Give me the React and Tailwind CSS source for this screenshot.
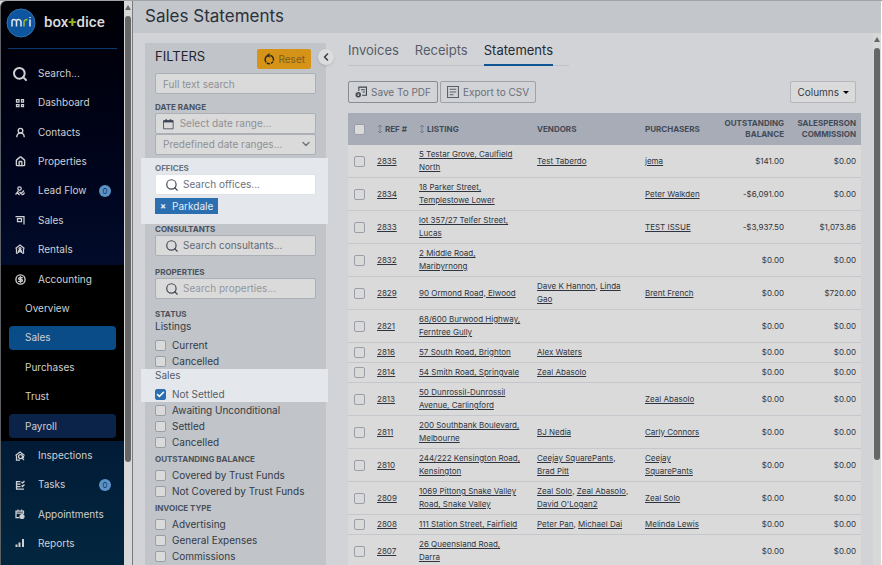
import { useState } from 'react';
import {
  Search,
  UserRound,
  House,
  CircleDollarSign,
  ChevronLeft,
  ChevronDown,
  Check,
} from 'lucide-react';

// ========== ICONS ==========
function Icon({ children }) {
  return (
    <svg viewBox="0 0 20 20" className="size-2.5" fill="none" stroke="currentColor" strokeWidth="2.500">
      {children}
    </svg>
  );
}

const DashboardIcon = () => (
  <Icon>
    <path d="M3 3h5v5H3zM13 3h4v5h-4zM3 13h5v4H3zM13 13h4v4h-4z" />
  </Icon>
);

const LeadIcon = () => (
  <Icon>
    <circle cx="9" cy="5" r="3.5" />
    <path d="M7 9c-1 3-2 4-4 5M1 17l4-4 4 5M9 12l3 3 6-6M13 17c3 1 5-1 6-4" />
  </Icon>
);

const SignIcon = () => (
  <Icon>
    <path d="M1 3h17v16" />
    <path d="M5 7h8v6H5z" />
  </Icon>
);

const RentalIcon = () => (
  <Icon>
    <path d="M1 9l9-7 9 7M3 9v9h3M17 9v9h-3" />
    <circle cx="10" cy="9" r="2" />
    <path d="M7 18v-4q3-3 6 0v4M7 15h6" />
  </Icon>
);

const InspectionIcon = () => (
  <Icon>
    <path d="M1 9l9-7 9 7M3 9v9h7" />
    <circle cx="11" cy="11" r="4" />
    <path d="M14 14l4 4M17 10v4" />
  </Icon>
);

const TasksIcon = () => (
  <Icon>
    <path d="M2 3h9M2 8h9M2 13h9M2 18h16M3 2v16M13 4l2 2 4-4M13 11l2 2 4-4" />
  </Icon>
);

const AppointmentIcon = () => (
  <Icon>
    <path d="M9 17H2V4h15v6M2 8h15M6 1v4M13 1v4" />
    <circle cx="14" cy="15" r="4" fill="currentColor" />
  </Icon>
);

const ReportsIcon = () => (
  <Icon>
    <path d="M3 18v-5M9 18V9M16 18V2" strokeWidth="4" />
  </Icon>
);

const ResetIcon = () => (
  <svg viewBox="0 0 20 20" className="size-3 text-[#2e2a1c]" fill="none" stroke="currentColor" strokeWidth="2.500">
    <path d="M9 4a7 7 0 1 0 3 0" strokeDasharray="14 1.500 5 1.500 5 1.500" />
    <path d="M11 0L6 4l5 4z" fill="currentColor" stroke="none" />
  </svg>
);

const CalendarIcon = () => (
  <svg viewBox="0 0 20 20" className="size-3 text-[#3b4450]" fill="none" stroke="currentColor" strokeWidth="1.500">
    <path d="M1 4h18v15H1z" />
    <path d="M1 5h18" strokeWidth="4" />
    <path d="M6 1v4M14 1v4" strokeWidth="3" />
  </svg>
);

const PdfIcon = () => (
  <svg viewBox="0 0 22 22" className="size-3 text-[#3f464f]" fill="none" stroke="currentColor" strokeWidth="2">
    <path d="M7 9V2h14v15h-8M11 7h7M14 11h4" />
    <circle cx="6" cy="16" r="5" fill="currentColor" stroke="none" />
    <path d="M6 13v5M4 16l2 2 2-2" stroke="#d2d3d7" strokeWidth="1.500" />
  </svg>
);

const CsvIcon = () => (
  <svg viewBox="0 0 22 22" className="size-3 text-[#59606a]" fill="none" stroke="currentColor" strokeWidth="2">
    <path d="M1 1h20v20H1zM5 6h12M5 11h12M5 16h7" />
  </svg>
);

const SortIcon = () => (
  <svg viewBox="0 0 6 10" className="h-2.5 w-1.5 shrink-0 text-[#7a808b]" fill="none" stroke="currentColor">
    <path d="M3 1v8M1 3l2-2 2 2M1 7l2 2 2-2" />
  </svg>
);

// ========== DATA ==========
const topMenu = [
  { label: 'Search...', icon: <Search className="size-4 shrink-0" strokeWidth={3} /> },
  { label: 'Dashboard', icon: <DashboardIcon /> },
  { label: 'Contacts', icon: <UserRound className="size-[11px]" strokeWidth={3} /> },
  { label: 'Properties', icon: <House className="size-[11px]" strokeWidth={3} /> },
  { label: 'Lead Flow', icon: <LeadIcon />, count: 0 },
  { label: 'Sales', icon: <SignIcon /> },
  { label: 'Rentals', icon: <RentalIcon /> },
];

const accountingMenu = [
  { label: 'Overview', style: '' },
  { label: 'Sales', style: 'bg-[#0a4c88]' },
  { label: 'Purchases', style: '' },
  { label: 'Trust', style: '' },
  { label: 'Payroll', style: 'bg-[#0c2349]' },
];

const bottomMenu = [
  { label: 'Inspections', icon: <InspectionIcon /> },
  { label: 'Tasks', icon: <TasksIcon />, count: 0 },
  { label: 'Appointments', icon: <AppointmentIcon /> },
  { label: 'Reports', icon: <ReportsIcon /> },
];

const statements = [
  { ref: 2835, listing: '5 Testar Grove, Caulfield\nNorth', vendors: ['Test Taberdo'], purchasers: ['jema'], balance: '$141.00', commission: '$0.00' },
  { ref: 2834, listing: '18 Parker Street,\nTemplestowe Lower', vendors: [], purchasers: ['Peter Walkden'], balance: '-$6,091.00', commission: '$0.00' },
  { ref: 2833, listing: 'lot 357/27 Telfer Street,\nLucas', vendors: [], purchasers: ['TEST ISSUE'], balance: '-$3,937.50', commission: '$1,073.86' },
  { ref: 2832, listing: '2 Middle Road,\nMaribyrnong', vendors: [], purchasers: [], balance: '$0.00', commission: '$0.00' },
  { ref: 2829, listing: '90 Ormond Road, Elwood', vendors: ['Dave K Hannon', 'Linda\nGao'], purchasers: ['Brent French'], balance: '$0.00', commission: '$720.00' },
  { ref: 2821, listing: '68/600 Burwood Highway,\nFerntree Gully', vendors: [], purchasers: [], balance: '$0.00', commission: '$0.00' },
  { ref: 2816, listing: '57 South Road, Brighton', vendors: ['Alex Waters'], purchasers: [], balance: '$0.00', commission: '$0.00' },
  { ref: 2814, listing: '54 Smith Road, Springvale', vendors: ['Zeal Abasolo'], purchasers: [], balance: '$0.00', commission: '$0.00' },
  { ref: 2813, listing: '50 Dunrossil-Dunrossil\nAvenue, Carlingford', vendors: [], purchasers: ['Zeal Abasolo'], balance: '$0.00', commission: '$0.00' },
  { ref: 2811, listing: '200 Southbank Boulevard,\nMelbourne', vendors: ['BJ Nedia'], purchasers: ['Carly Connors'], balance: '$0.00', commission: '$0.00' },
  { ref: 2810, listing: '244/222 Kensington Road,\nKensington', vendors: ['Ceejay SquarePants', '\nBrad Pitt'], purchasers: ['Ceejay\nSquarePants'], balance: '$0.00', commission: '$0.00' },
  { ref: 2809, listing: '1069 Pittong Snake Valley\nRoad, Snake Valley', vendors: ['Zeal Solo', 'Zeal Abasolo', "\nDavid O'Logan2"], purchasers: ['Zeal Solo'], balance: '$0.00', commission: '$0.00' },
  { ref: 2808, listing: '111 Station Street, Fairfield', vendors: ['Peter Pan', 'Michael Dai'], purchasers: ['Melinda Lewis'], balance: '$0.00', commission: '$0.00' },
  { ref: 2807, listing: '26 Queensland Road,\nDarra', vendors: [], purchasers: [], balance: '$0.00', commission: '$0.00' },
];

// ========== SHARED ==========
function ScrollBar({ className, thumb }) {
  return (
    <div className={`flex w-2 shrink-0 flex-col items-center bg-[#d8d8d8] ${className}`} aria-hidden="true">
      <div className="border-x-3 border-b-5 border-x-transparent border-b-[#666]" />
      <div className={`mt-1.5 w-1.5 rounded-full bg-[#666] ${thumb}`} />
    </div>
  );
}

function CheckBox({ label, id, defaultChecked = false }) {
  return (
    <span className="relative flex size-[11px] shrink-0">
      <input
        id={id}
        type="checkbox"
        aria-label={label}
        defaultChecked={defaultChecked}
        className="peer size-[11px] appearance-none rounded-xs border border-[#9a9ea8] bg-[#dadada] checked:border-[#2b6fb0] checked:bg-[#2b6fb0]"
      />
      <Check className="pointer-events-none absolute inset-px hidden size-[9px] text-white peer-checked:block" strokeWidth={4} />
    </span>
  );
}

// ========== SIDEBAR ==========
function MenuItem({ item }) {
  return (
    <a href="#" className="flex h-[29px] items-center pr-[13px] pl-[11px]">
      <span className="flex w-4 justify-center">{item.icon}</span>
      <span className="ml-2.5 flex-1">{item.label}</span>
      {item.count !== undefined && (
        <span className="flex size-3 items-center justify-center rounded-full bg-[#5b93c8] text-[8px] text-[#12355c]">
          {item.count}
        </span>
      )}
    </a>
  );
}

function Sidebar() {
  return (
    <nav className="flex w-[124px] shrink-0 flex-col overflow-hidden rounded-tl-md border-l border-[#5d6166] bg-linear-to-b from-[#000006] via-[#010b29] via-45% to-[#03263f] text-[10px] text-[#cfd0d2]">
      <div className="mx-[5px] flex h-[47px] shrink-0 items-center pb-1">
        <svg viewBox="0 0 30 30" className="size-[30px] shrink-0">
          <circle cx="15" cy="15" r="14" fill="#0e559f" stroke="#2f74b5" />
          <path d="M6 18.500v-5q0-2 2-2t2.500 2v5M10.500 13.500q0-2 2-2t2.500 2v5" fill="none" stroke="#e3e8ee" strokeWidth="1.500" />
          <path d="M18 18.500v-4q0-3 3.500-3" fill="none" stroke="#9dbb2c" strokeWidth="1.500" />
          <path d="M24 11.500v7M24 9v1" fill="none" stroke="#e3e8ee" strokeWidth="1.500" />
        </svg>
        <span className="ml-2 font-['Roboto'] text-[15px] font-medium whitespace-nowrap text-[#dcdcdc]">
          box<span className="font-bold text-[#94b51c]">+</span>dice
        </span>
      </div>
      <div className="mx-[7px] h-px shrink-0 bg-[#083a70]" />
      <div className="flex h-[216px] shrink-0 flex-col justify-between pt-2.5 pb-px">
        {topMenu.map((item) => (
          <MenuItem key={item.label} item={item} />
        ))}
      </div>
      <div className="shrink-0 bg-black pb-[3px]">
        <MenuItem item={{ label: 'Accounting', icon: <CircleDollarSign className="size-[11px]" strokeWidth={3} /> }} />
        <div className="mx-2 mt-0.5 flex h-[142px] flex-col justify-between">
          {accountingMenu.map((item) => (
            <a key={item.label} href="#" className={`flex h-6 items-center rounded-sm px-4 ${item.style}`}>
              {item.label}
            </a>
          ))}
        </div>
      </div>
      <div className="flex h-[117px] shrink-0 flex-col justify-between">
        {bottomMenu.map((item) => (
          <MenuItem key={item.label} item={item} />
        ))}
      </div>
    </nav>
  );
}

// ========== FILTERS ==========
function FilterLabel({ children, htmlFor, className = 'text-[#4a525e]' }) {
  return (
    <label htmlFor={htmlFor} className={`block text-[8px] leading-[11px] font-bold ${className}`}>
      {children}
    </label>
  );
}

function SearchBox({ id, placeholder, className }) {
  return (
    <div className={`flex h-[21px] items-center rounded-xs border pl-[9px] ${className}`}>
      <Search className="size-3.5 shrink-0 text-[#3f4854]" strokeWidth={2} />
      <input id={id} type="text" placeholder={placeholder} className="ml-1 w-full min-w-0 bg-transparent outline-none" />
    </div>
  );
}

function CheckRow({ id, label, defaultChecked }) {
  return (
    <div className="flex h-4 items-center gap-1.5">
      <CheckBox id={id} defaultChecked={defaultChecked} />
      <label htmlFor={id}>{label}</label>
    </div>
  );
}

function Filters({ onCollapse }) {
  return (
    <aside className="relative w-[181px] shrink-0 bg-[#c1c4c9] px-2.5 pt-1.5 text-[10px] text-[#343b45]">
      <button
        type="button"
        aria-label="Collapse filters"
        onClick={onCollapse}
        className="absolute top-1.5 -right-2 flex size-4 items-center justify-center rounded-full bg-[#dcdcdc] text-[#333b45] shadow"
      >
        <ChevronLeft className="size-3" strokeWidth={3} />
      </button>

      <div className="flex h-6 items-start justify-between pr-[5px]">
        <h2 className="text-[13px] leading-[14px] text-[#1f2430]">FILTERS</h2>
        <button type="button" className="flex h-5 items-center gap-1 rounded-xs bg-[#d59318] px-1.5 text-[#7c5c1d]">
          <ResetIcon />
          Reset
        </button>
      </div>
      <input
        type="text"
        aria-label="Full text search"
        placeholder="Full text search"
        className="block h-[21px] w-full rounded-xs border border-[#acafb6] bg-[#dadada] px-[7px] placeholder:text-[#8e9094]"
      />

      <FilterLabel htmlFor="date-range" className="mt-2 text-[#4a525e]">DATE RANGE</FilterLabel>
      <div className="flex h-[21px] items-center rounded-xs border border-[#acafb6] bg-[#dadada] pl-[7px]">
        <CalendarIcon />
        <input
          id="date-range"
          type="text"
          placeholder="Select date range..."
          className="ml-1.5 w-full min-w-0 bg-transparent outline-none placeholder:text-[#8e9094]"
        />
      </div>
      <div className="relative">
        <select
          aria-label="Predefined date ranges"
          className="block h-[21px] w-full appearance-none rounded-xs border border-[#acafb6] bg-[#dadada] px-[7px] text-[#8e9094]"
        >
          <option>Predefined date ranges...</option>
        </select>
        <ChevronDown className="pointer-events-none absolute top-1 right-1 size-3 text-[#707680]" strokeWidth={3} />
      </div>

      {/* Highlighted offices filter */}
      <div className="-mr-3 -ml-3.5 mt-[3px] bg-[#e4e8ed] pt-[5px] pr-3 pb-2.5 pl-3.5">
        <FilterLabel htmlFor="offices" className="text-[#6a727d]">OFFICES</FilterLabel>
        <SearchBox id="offices" placeholder="Search offices..." className="border-[#dfe3e8] bg-white [&_input]:placeholder:text-[#6b727b]" />
        <button type="button" className="mt-[3px] flex h-4 items-center gap-1.5 bg-[#2b6fb0] px-[5px] text-[#e6edf5]">
          <span className="text-[9px] font-bold">×</span>
          Parkdale
        </button>
      </div>

      <FilterLabel htmlFor="consultants">CONSULTANTS</FilterLabel>
      <SearchBox id="consultants" placeholder="Search consultants..." className="border-[#acafb6] bg-[#dadada] [&_input]:placeholder:text-[#636973]" />
      <FilterLabel htmlFor="properties" className="mt-[11px] text-[#4a525e]">PROPERTIES</FilterLabel>
      <SearchBox id="properties" placeholder="Search properties..." className="border-[#acafb6] bg-[#dadada] [&_input]:placeholder:text-[#95979b]" />

      <h3 className="mt-2.5 text-[8px] leading-[11px] font-bold text-[#4a525e]">STATUS</h3>
      <p className="mb-1 leading-[13px]">Listings</p>
      <CheckRow id="listing-current" label="Current" />
      <CheckRow id="listing-cancelled" label="Cancelled" />
      <div className="-mr-3 -ml-3.5 bg-[#e4e8ed] pr-3 pl-3.5 text-[#565d67]">
        <p className="mb-1 leading-[13px]">Sales</p>
        <CheckRow id="sale-not-settled" label="Not Settled" defaultChecked />
      </div>
      <CheckRow id="sale-awaiting" label="Awaiting Unconditional" />
      <CheckRow id="sale-settled" label="Settled" />
      <CheckRow id="sale-cancelled" label="Cancelled" />

      <h3 className="mt-1 mb-0.5 text-[8px] leading-[11px] font-bold text-[#4a525e]">OUTSTANDING BALANCE</h3>
      <CheckRow id="covered" label="Covered by Trust Funds" />
      <CheckRow id="not-covered" label="Not Covered by Trust Funds" />

      <h3 className="mt-1 mb-0.5 text-[8px] leading-[11px] font-bold text-[#4a525e]">INVOICE TYPE</h3>
      <CheckRow id="advertising" label="Advertising" />
      <CheckRow id="general-expenses" label="General Expenses" />
      <CheckRow id="commissions" label="Commissions" />
    </aside>
  );
}

// ========== TABLE ==========
function LinkList({ items }) {
  return items.map((item, i) => (
    <span key={item}>
      {i > 0 && (item.startsWith('\n') ? '\n' : ' ')}
      <a href="#" className="underline">{item.trim()}</a>
      {i < items.length - 1 && ','}
    </span>
  ));
}

function StatementsTable() {
  return (
    <table className="mt-2.5 w-full table-fixed border-collapse text-[8px] leading-[13px] text-[#2f3540]">
      <colgroup>
        <col className="w-[29px]" />
        <col className="w-[42px]" />
        <col className="w-[118px]" />
        <col className="w-[108px]" />
        <col className="w-[72px]" />
        <col className="w-[67px]" />
        <col className="w-[77px]" />
      </colgroup>
      <thead className="bg-[#a7acb6] text-left leading-[11px] text-[#434a56]">
        <tr className="h-8">
          <th className="pl-1.5"><CheckBox label="Select all statements" /></th>
          <th><span className="flex items-center gap-0.5 whitespace-nowrap"><SortIcon />REF #</span></th>
          <th><span className="flex items-center gap-0.5"><SortIcon />LISTING</span></th>
          <th>VENDORS</th>
          <th>PURCHASERS</th>
          <th className="text-right">OUTSTANDING<br />BALANCE</th>
          <th className="pr-[5px] text-right">SALESPERSON<br />COMMISSION</th>
        </tr>
      </thead>
      <tbody className="bg-[#dadada] whitespace-pre-line">
        {statements.map((row) => (
          <tr key={row.ref} className="border-b border-[#c5c7cc]">
            <td className="pl-1.5"><CheckBox label={`Select statement ${row.ref}`} /></td>
            <td><a href="#" className="underline">{row.ref}</a></td>
            <td className="py-[3px]"><a href="#" className="underline">{row.listing}</a></td>
            <td className="py-[3px]"><LinkList items={row.vendors} /></td>
            <td className="py-[3px]"><LinkList items={row.purchasers} /></td>
            <td className="text-right">{row.balance}</td>
            <td className="pr-[5px] text-right">{row.commission}</td>
          </tr>
        ))}
      </tbody>
    </table>
  );
}

export default function App() {
  const [showFilters, setShowFilters] = useState(true);

  return (
    <div className="flex h-screen overflow-hidden border-t border-[#a0a3a7] bg-[#d8d8d8] font-['Inter','Liberation_Sans',sans-serif]">
      <Sidebar />
      <ScrollBar className="pt-1" thumb="h-[446px]" />
      <main className="flex min-w-0 flex-1 flex-col border-r border-l border-r-white border-l-[#777b80] bg-[#d2d3d7]">
        <header className="flex h-8 shrink-0 items-center bg-[#c3c6ca] pl-3">
          <h1 className="text-[17px] text-[#2b303a]">Sales Statements</h1>
        </header>
        <div className="flex min-h-0 flex-1">
          <div className="flex min-w-0 flex-1 items-stretch gap-[22px] overflow-hidden pt-2.5 pr-3 pl-3">
            {showFilters && <Filters onCollapse={() => setShowFilters(false)} />}
            <section className="min-w-0 flex-1">
              <div className="flex">
                <div className="flex h-[23px] gap-4 border-b border-[#bfc2c7] pr-4 text-[13px] leading-[14px] text-[#565d68]">
                  <a href="#">Invoices</a>
                  <a href="#">Receipts</a>
                  <a href="#" className="h-[23px] border-b-2 border-[#0f5596] text-[#252a34]">Statements</a>
                </div>
              </div>
              <div className="mt-[15px] flex h-[22px] gap-0.5 text-[10px] text-[#6a6f78]">
                <button type="button" className="flex items-center gap-1 rounded-xs border border-[#868b94] px-1.5">
                  <PdfIcon />
                  Save To PDF
                </button>
                <button type="button" className="flex items-center gap-1 rounded-xs border border-[#9da1a8] px-1.5">
                  <CsvIcon />
                  Export to CSV
                </button>
                <button type="button" className="mr-[5px] ml-auto flex items-center gap-1 rounded-xs border border-[#b4b7bd] bg-[#dadada] px-1.5 text-[#343b46]">
                  Columns
                  <span className="border-x-3 border-t-3 border-x-transparent border-t-black" />
                </button>
              </div>
              <StatementsTable />
            </section>
          </div>
          <ScrollBar className="pt-1" thumb="h-[412px]" />
        </div>
      </main>
    </div>
  );
}
